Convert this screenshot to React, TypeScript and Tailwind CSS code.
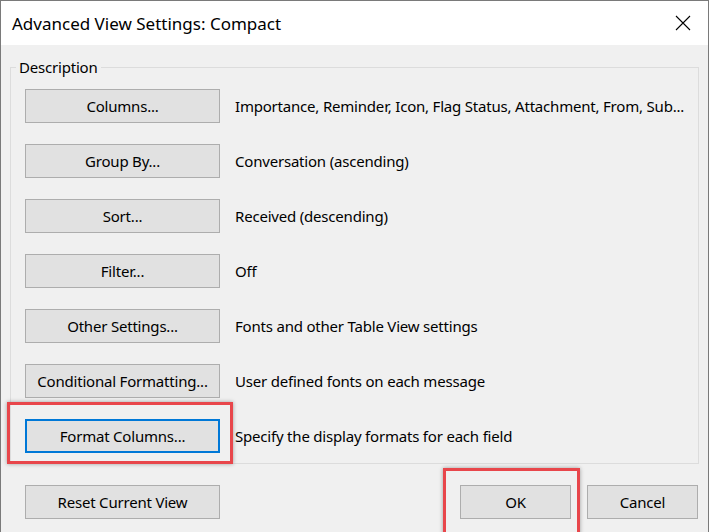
import React from 'react'

const rows: { label: string; desc: string; focused?: boolean }[] = [
  { label: 'Columns...', desc: 'Importance, Reminder, Icon, Flag Status, Attachment, From, Sub...' },
  { label: 'Group By...', desc: 'Conversation (ascending)' },
  { label: 'Sort...', desc: 'Received (descending)' },
  { label: 'Filter...', desc: 'Off' },
  { label: 'Other Settings...', desc: 'Fonts and other Table View settings' },
  { label: 'Conditional Formatting...', desc: 'User defined fonts on each message' },
  { label: 'Format Columns...', desc: 'Specify the display formats for each field', focused: true },
]

const font = { fontFamily: '"Noto Sans", "Open Sans", sans-serif' }

function WinButton({ label, focused, className = '' }: { label: string; focused?: boolean; className?: string }) {
  return (
    <button
      className={`h-[34px] bg-[#e1e1e1] text-[15px] tracking-[-0.2px] text-black flex items-center justify-center ${
        focused ? 'border-2 border-[#0078d7]' : 'border border-[#adadad]'
      } ${className}`}
    >
      {label}
    </button>
  )
}

function Highlight({ className }: { className: string }) {
  return <div className={`absolute border-[3px] border-[#e8464b] shadow-[0_0_4px_rgba(0,0,0,0.35)] pointer-events-none ${className}`} />
}

export default function App() {
  return (
    <div style={font} className="w-[709px] h-[532px] overflow-hidden bg-[#f0f0f0] border-l border-t border-r border-[#7a7a7a] flex flex-col">
      <div className="h-[44px] bg-white flex items-center justify-between pl-[11px] pr-[17px] shrink-0">
        <span className="text-[17px] text-black leading-none">Advanced View Settings: Compact</span>
        <svg width="16" height="16" viewBox="0 0 16 16" className="text-black">
          <path d="M1 1L15 15M15 1L1 15" stroke="currentColor" strokeWidth="1.1" fill="none" />
        </svg>
      </div>

      <fieldset className="mt-[12px] ml-[9px] w-[689px] border border-[#dcdcdc] pl-[14px] pr-2 pt-[12px] pb-[10px] flex flex-col gap-[21px]">
        <legend className="-ml-[9px] px-[3px] text-[15px] tracking-[-0.2px] leading-[20px] text-black">Description</legend>
        {rows.map((r) => (
          <div key={r.label} className="flex items-center gap-[15px]">
            <div className="relative shrink-0">
              <WinButton label={r.label} focused={r.focused} className="w-[195px]" />
              {r.focused && <Highlight className="-left-[18px] -top-[17px] -right-[13px] -bottom-[11px]" />}
            </div>
            <span className="text-[15px] tracking-[-0.2px] text-black whitespace-nowrap pt-px">{r.desc}</span>
          </div>
        ))}
      </fieldset>

      <div className="mt-[21px] pl-[24px] pr-[10px] flex items-center">
        <WinButton label="Reset Current View" className="w-[195px]" />
        <div className="ml-auto flex gap-[16px]">
          <div className="relative">
            <WinButton label="OK" className="w-[111px]" />
            <Highlight className="-left-[17px] -top-[17px] -right-[9px] -bottom-[20px]" />
          </div>
          <WinButton label="Cancel" className="w-[111px]" />
        </div>
      </div>
    </div>
  )
}
